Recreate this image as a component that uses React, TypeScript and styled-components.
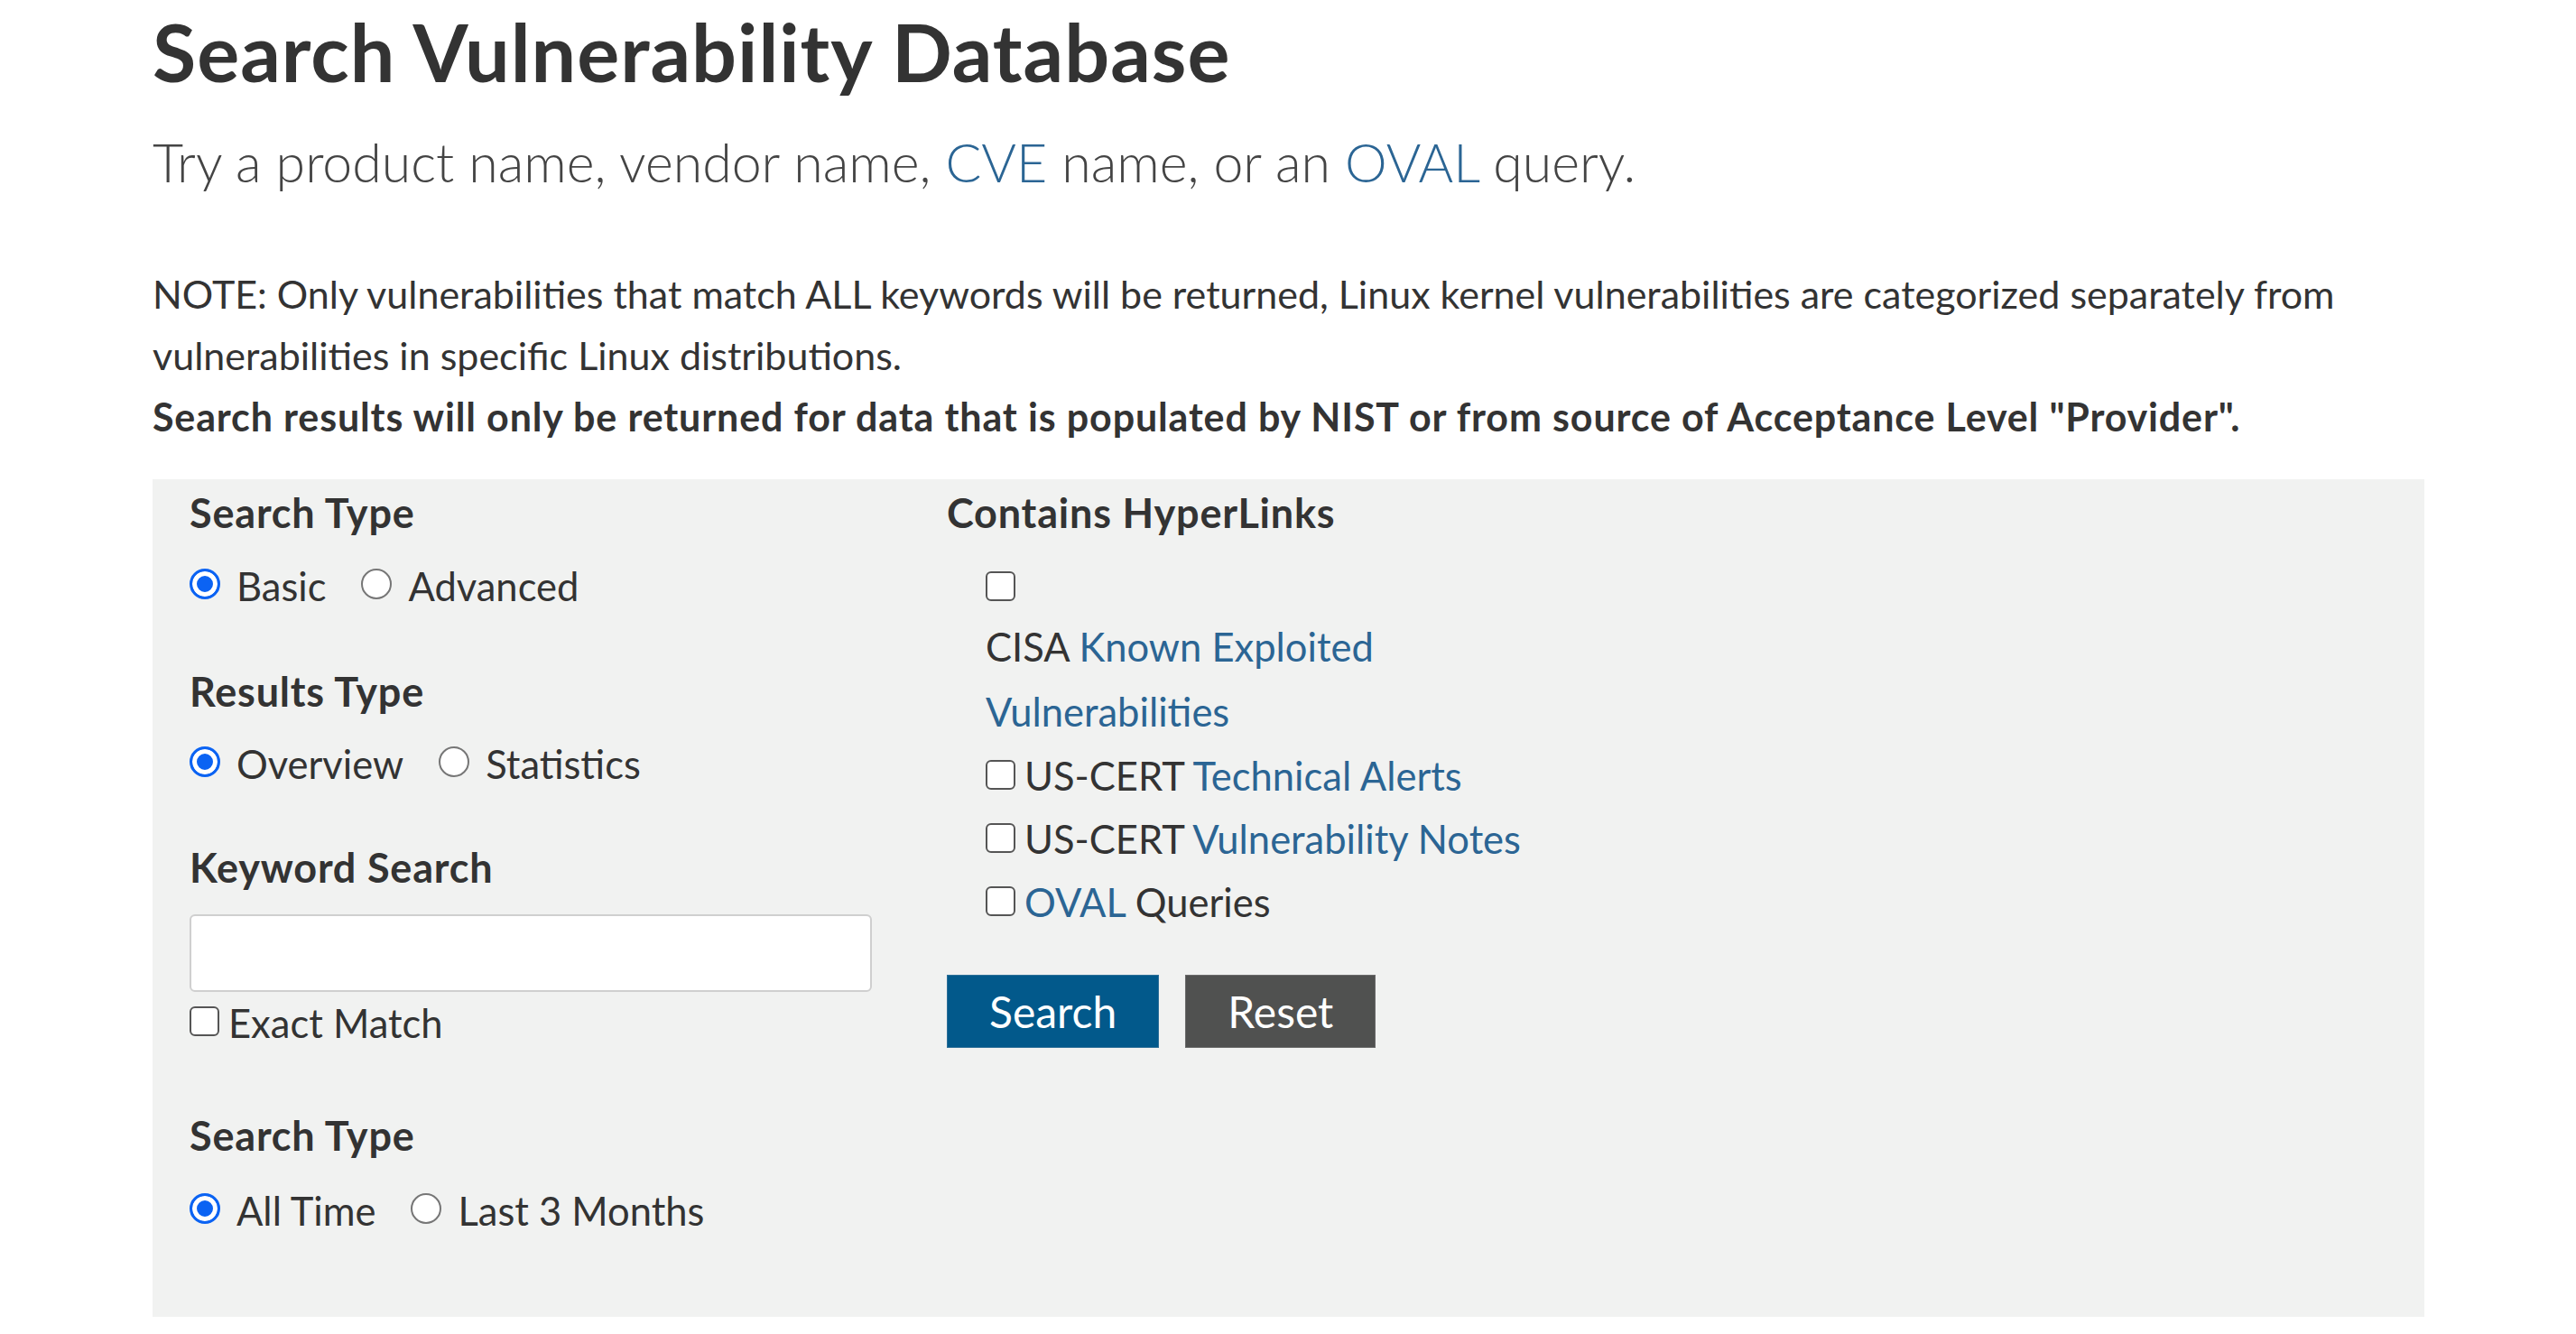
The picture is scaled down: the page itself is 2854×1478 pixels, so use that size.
import React from "react";
import styled, { createGlobalStyle } from "styled-components";

const GlobalStyle = createGlobalStyle`
  html, body { margin: 0; padding: 0; background: #ffffff; }
  body {
    font-family: Lato, "Source Sans Pro", "Noto Sans", sans-serif;
    color: #333333;
  }
  *, *::before, *::after { box-sizing: border-box; }
`;

const Page = styled.main`
  width: 2517px;
  margin-left: 169px;
  padding-top: 5px;
`;

const Title = styled.h1`
  margin: 0;
  font-size: 88px;
  font-weight: 700;
  letter-spacing: 1px;
  line-height: 1.2;
  color: #333333;
`;

const Lead = styled.p`
  margin: 34px 0 0;
  font-size: 59px;
  font-weight: 300;
  line-height: 1.2;
  color: #444444;
`;

const Link = styled.a`
  color: #2b6594;
  text-decoration: none;
`;

const Note = styled.p`
  margin: 77px 0 0;
  font-size: 43px;
  line-height: 68px;
  color: #333333;
`;

const Strong = styled.strong`
  font-weight: 700;
  letter-spacing: 0.85px;
`;

const Panel = styled.form`
  margin-top: 35px;
  background: #f1f2f1;
  display: grid;
  grid-template-columns: 839px 1fr;
  padding: 12px 0 84px;
`;

const Column = styled.div`
  padding: 0 41px;
  display: flex;
  flex-direction: column;
  align-items: flex-start;
`;

const FieldLabel = styled.div<{ $top?: number }>`
  margin-top: ${(p) => p.$top ?? 0}px;
  font-size: 45px;
  font-weight: 700;
  letter-spacing: 0.8px;
  line-height: 50px;
  color: #333333;
  white-space: nowrap;
`;

const OptionRow = styled.div<{ $top?: number }>`
  margin-top: ${(p) => p.$top ?? 0}px;
  display: flex;
  gap: 39px;
  height: 68px;
  font-size: 43.5px;
  line-height: 68px;
  color: #333333;
`;

const Option = styled.label`
  display: flex;
  align-items: flex-start;
  gap: 18px;
  white-space: nowrap;
`;

const Radio = styled.input.attrs({ type: "radio" })`
  appearance: none;
  margin: 15px 0 0;
  width: 34px;
  height: 34px;
  border-radius: 50%;
  border: 2px solid #767676;
  background: #ffffff;
  flex: none;
  &:checked {
    border: 3px solid #0b63f3;
    background: #0b63f3;
    box-shadow: inset 0 0 0 5px #ffffff;
  }
`;

const Check = styled.input.attrs({ type: "checkbox" })<{ $top?: number }>`
  appearance: none;
  margin: ${(p) => p.$top ?? 18}px 0 0;
  width: 33px;
  height: 33px;
  border-radius: 6px;
  border: 2px solid #555555;
  background: #ffffff;
  flex: none;
`;

const TextInput = styled.input`
  margin-top: 27px;
  width: 756px;
  height: 86px;
  border: 2px solid #cfcfcf;
  border-radius: 6px;
  background: #ffffff;
  font-size: 40px;
  padding: 0 16px;
`;

const CheckRow = styled.label<{ $height?: number; $top?: number }>`
  margin-top: ${(p) => p.$top ?? 0}px;
  display: flex;
  align-items: flex-start;
  gap: 10px;
  height: ${(p) => p.$height ?? 70}px;
  font-size: 43.5px;
  line-height: ${(p) => p.$height ?? 70}px;
  color: #333333;
  white-space: nowrap;
`;

const LinkList = styled.div`
  padding-left: 43px;
  display: flex;
  flex-direction: column;
  align-items: flex-start;
`;

const WrapLabel = styled.label`
  font-size: 43.5px;
  line-height: 72px;
  color: #333333;
  white-space: nowrap;
`;

const Buttons = styled.div`
  margin-top: 46px;
  display: flex;
  gap: 29px;
`;

const Button = styled.button<{ $tone: "primary" | "neutral" }>`
  height: 81px;
  padding: 0 46px;
  font-family: inherit;
  font-size: 48px;
  font-weight: 400;
  color: #ffffff;
  border: 1px solid ${(p) => (p.$tone === "primary" ? "#2d6f98" : "#6a6a6a")};
  background: ${(p) => (p.$tone === "primary" ? "#02598b" : "#505150")};
  border-radius: 0;
  cursor: pointer;
`;

export default function App() {
  return (
    <>
      <GlobalStyle />
      <Page>
        <Title>Search Vulnerability Database</Title>
        <Lead>
          Try a product name, vendor name, <Link href="#">CVE</Link> name, or an{" "}
          <Link href="#">OVAL</Link> query.
        </Lead>
        <Note>
          NOTE: Only vulnerabilities that match ALL keywords will be returned, Linux kernel
          vulnerabilities are categorized separately from vulnerabilities in specific Linux
          distributions.
          <br />
          <Strong>
            Search results will only be returned for data that is populated by NIST or from source
            of Acceptance Level "Provider".
          </Strong>
        </Note>
        <Panel onSubmit={(e) => e.preventDefault()}>
          <Column>
            <FieldLabel>Search Type</FieldLabel>
            <OptionRow $top={22}>
              <Option>
                <Radio name="searchType" defaultChecked />
                Basic
              </Option>
              <Option>
                <Radio name="searchType" />
                Advanced
              </Option>
            </OptionRow>
            <FieldLabel $top={58}>Results Type</FieldLabel>
            <OptionRow $top={21}>
              <Option>
                <Radio name="resultsType" defaultChecked />
                Overview
              </Option>
              <Option>
                <Radio name="resultsType" />
                Statistics
              </Option>
            </OptionRow>
            <FieldLabel $top={56}>Keyword Search</FieldLabel>
            <TextInput type="text" />
            <CheckRow $height={68}>
              <Check $top={16} />
              Exact Match
            </CheckRow>
            <FieldLabel $top={66}>Search Type</FieldLabel>
            <OptionRow $top={24}>
              <Option>
                <Radio name="timeRange" defaultChecked />
                All Time
              </Option>
              <Option>
                <Radio name="timeRange" />
                Last 3 Months
              </Option>
            </OptionRow>
          </Column>
          <Column>
            <FieldLabel>Contains HyperLinks</FieldLabel>
            <LinkList>
              <CheckRow $height={65} $top={22}>
                <Check $top={18} />
              </CheckRow>
              <WrapLabel>
                CISA <Link href="#">Known Exploited</Link>
                <br />
                <Link href="#">Vulnerabilities</Link>
              </WrapLabel>
              <CheckRow>
                <Check />
                <span>
                  US-CERT <Link href="#">Technical Alerts</Link>
                </span>
              </CheckRow>
              <CheckRow>
                <Check />
                <span>
                  US-CERT <Link href="#">Vulnerability Notes</Link>
                </span>
              </CheckRow>
              <CheckRow>
                <Check />
                <span>
                  <Link href="#">OVAL</Link> Queries
                </span>
              </CheckRow>
            </LinkList>
            <Buttons>
              <Button type="submit" $tone="primary">
                Search
              </Button>
              <Button type="reset" $tone="neutral">
                Reset
              </Button>
            </Buttons>
          </Column>
        </Panel>
      </Page>
    </>
  );
}
